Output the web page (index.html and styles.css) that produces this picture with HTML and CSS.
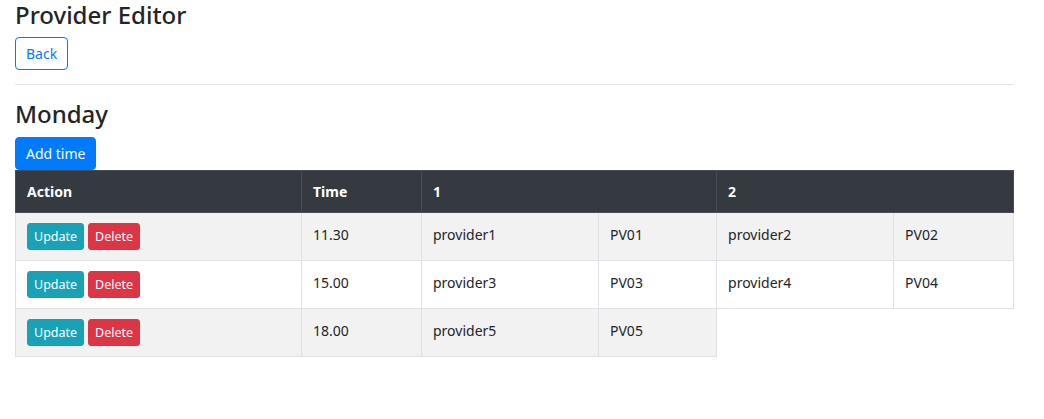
FILE: index.html
```html
<!DOCTYPE html>
<html>
<head>
<meta charset="utf-8">
<link rel="stylesheet" href="styles.css">
</head>
<body>
<div class="page">
  <h3 class="title">Provider Editor</h3>
  <div class="bar"><button class="btn btn-outline">Back</button></div>
  <hr class="divider">
  <h4 class="day">Monday</h4>
  <div class="bar"><button class="btn btn-primary">Add time</button></div>
  <table class="grid">
    <colgroup>
      <col class="c-action"><col class="c-time"><col class="c-name"><col class="c-code"><col class="c-name"><col class="c-code2">
    </colgroup>
    <thead>
      <tr><th>Action</th><th>Time</th><th colspan="2">1</th><th colspan="2">2</th></tr>
    </thead>
    <tbody>
      <tr class="odd">
        <td><button class="btn-sm info">Update</button><button class="btn-sm danger">Delete</button></td>
        <td>11.30</td><td>provider1</td><td>PV01</td><td>provider2</td><td>PV02</td>
      </tr>
      <tr>
        <td><button class="btn-sm info">Update</button><button class="btn-sm danger">Delete</button></td>
        <td>15.00</td><td>provider3</td><td>PV03</td><td>provider4</td><td>PV04</td>
      </tr>
      <tr class="odd">
        <td><button class="btn-sm info">Update</button><button class="btn-sm danger">Delete</button></td>
        <td>18.00</td><td>provider5</td><td>PV05</td>
      </tr>
    </tbody>
  </table>
</div>
</body>
</html>
```
FILE: styles.css
```css
* { box-sizing: border-box; }
body {
  margin: 0;
  font-family: "Noto Sans", "Open Sans", sans-serif;
  color: #212529;
  background: #fff;
  font-size: 14px;
}
.page {
  width: 1029px;
  padding: 0 15px;
}
.title {
  margin: 0 0 8px;
  font-size: 24px;
  font-weight: 500;
  line-height: 29px;
}
.bar { display: flex; }
.btn {
  font-family: inherit;
  font-size: 14px;
  line-height: 21px;
  padding: 5px 10px;
  border-radius: 4px;
  border: 1px solid transparent;
  cursor: pointer;
}
.btn-outline {
  background: #fff;
  color: #007bff;
  border-color: #007bff;
}
.btn-primary {
  background: #007bff;
  color: #fff;
  border-color: #007bff;
}
.divider {
  margin: 14px 0 0;
  border: 0;
  border-top: 1px solid rgba(0,0,0,.1);
}
.day {
  margin: 13px 0 8px;
  font-size: 24px;
  font-weight: 500;
  line-height: 31px;
}
.grid {
  width: 999px;
  border-collapse: collapse;
  table-layout: fixed;
}
.c-action { width: 286px; }
.c-time { width: 120px; }
.c-name { width: 177px; }
.c-code { width: 118px; }
.c-code2 { width: 120px; }
.grid th {
  background: #343a40;
  color: #fff;
  border: 1px solid #454d55;
  text-align: left;
  font-weight: 700;
  padding: 10px 11px 10px;
  line-height: 19px;
  height: 42px;
}
.grid td {
  border: 1px solid #dee2e6;
  padding: 10px 11px 9px;
  height: 48px;
  vertical-align: top;
  line-height: 22px;
}
.grid td:not(:first-child) { padding-top: 11px; }
.grid tr.odd td { background: #f2f2f2; }
.btn-sm {
  font-family: inherit;
  font-size: 12.5px;
  line-height: 19px;
  padding: 3px 6px;
  border: 1px solid transparent;
  border-radius: 3px;
  color: #fff;
  margin-right: 4px;
}
.info { background: #17a2b8; border-color: #17a2b8; }
.danger { background: #dc3545; border-color: #dc3545; }
```
